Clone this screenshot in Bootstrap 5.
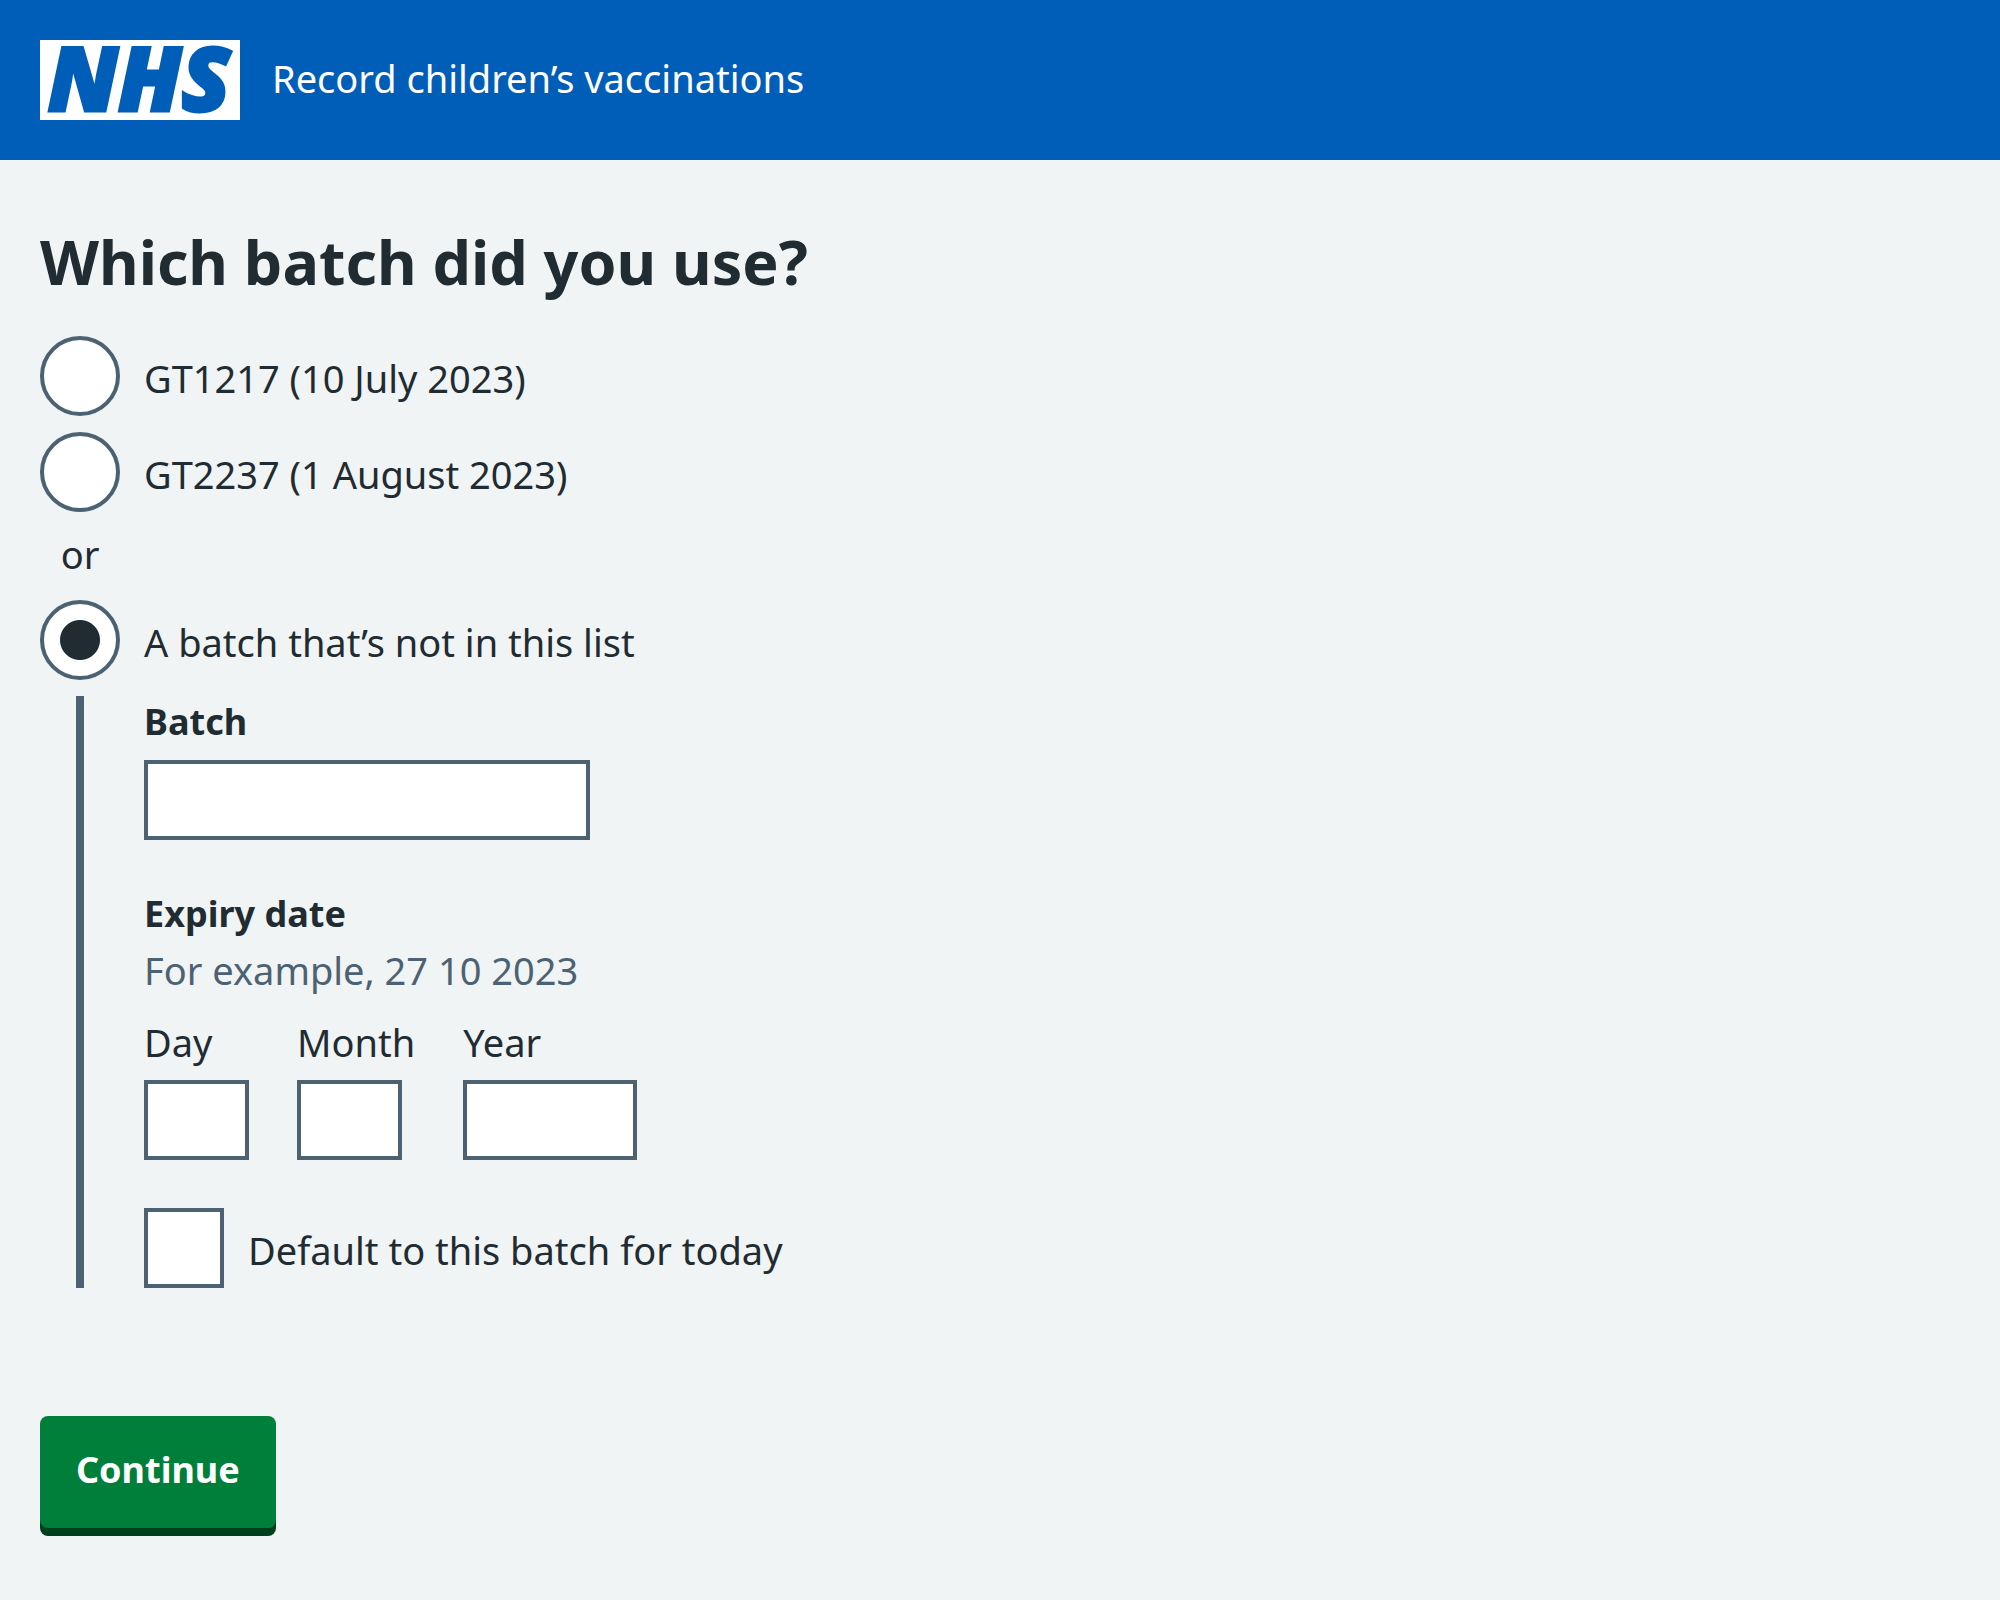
<!DOCTYPE html>
<html lang="en">
<head>
<meta charset="utf-8">
<meta name="viewport" content="width=device-width, initial-scale=1">
<title>Which batch did you use? – Record children’s vaccinations</title>
<link href="https://cdn.jsdelivr.net/npm/bootstrap@5.3.0/dist/css/bootstrap.min.css" rel="stylesheet">
<style>
  :root { --ink: #212b32; --slate: #4c6272; --blue: #005eb8; }
  body { background: #f0f4f5; color: var(--ink); font-family: "Noto Sans", "Open Sans", sans-serif; font-size: 38px; line-height: 52px; }
  .site-header { background: var(--blue); padding: 40px; gap: 32px; }
  .service-name { color: #fff; padding-bottom: 4px; }
  .service-name:hover { color: #fff; text-decoration: underline !important; }
  .site-main { padding: 64px 40px; }
  .page-title { font-size: 61px; line-height: 76px; font-weight: 700; margin-bottom: 36px; }
  .choices { gap: 16px; }
  .choice { gap: 24px; }
  .choice label { padding-top: 16px; }
  .form-check-input.pick, .form-control.field { border: 4px solid var(--slate); background-color: #fff; }
  .form-check-input.pick { width: 80px; height: 80px; margin: 0; }
  .form-check-input.pick[type=checkbox] { border-radius: 0; }
  .form-check-input.pick[type=radio]:checked { background-image: radial-gradient(circle, var(--ink) 19.5px, transparent 20.5px); background-size: auto; }
  .form-check-input.pick[type=checkbox]:checked { background-color: var(--slate); }
  .form-control.field { height: 80px; border-radius: 0; color: var(--ink); font-size: 38px; padding: 8px; }
  .pick:focus, .form-control.field:focus { box-shadow: 0 0 0 8px #ffeb3b; }
  .divider { width: 80px; margin-bottom: 4px; }
  .conditional { margin-left: 36px; padding-left: 60px; border-left: 8px solid var(--slate); }
  .field-label { margin-bottom: 12px; }
  .strong-label { font-size: 36px; line-height: 52px; font-weight: 700; }
  .batch-field { width: 446px; }
  .two-digits { width: 105px; }
  .four-digits { width: 174px; }
  .dates { gap: 48px; margin-top: 20px; margin-bottom: 48px; }
  .hint { color: var(--slate); padding-top: 4px; }
  .expiry { margin-top: 48px; }
  .btn.go { background: #007f3b; color: #fff; border: 0; border-radius: 8px; box-shadow: 0 8px 0 #00401e; padding: 28px 36px 32px; margin-top: 128px; }
  .btn.go:hover { background: #00662f; color: #fff; }
</style>
<script src="https://cdn.jsdelivr.net/npm/bootstrap@5.3.0/dist/js/bootstrap.bundle.min.js"></script>
</head>
<body>
<header class="site-header d-flex align-items-center">
  <a href="#" class="d-block flex-shrink-0" aria-label="NHS home">
    <svg class="d-block overflow-visible" width="200" height="80" viewBox="0 0 200 80">
      <rect width="200" height="80" fill="#fff"/>
      <text x="99" y="71" text-anchor="middle" font-family="Open Sans, Noto Sans, sans-serif" font-size="89" font-weight="800" font-style="italic" fill="#005eb8" stroke="#005eb8" stroke-width="3">NHS</text>
    </svg>
  </a>
  <a href="#" class="service-name text-decoration-none">Record children’s vaccinations</a>
</header>
<main class="site-main">
  <form>
    <h1 class="page-title" id="batch-question">Which batch did you use?</h1>
    <div class="choices d-flex flex-column" role="radiogroup" aria-labelledby="batch-question">
      <div class="choice d-flex align-items-start">
        <input class="form-check-input pick flex-shrink-0" type="radio" name="batch" id="batch-1">
        <label for="batch-1">GT1217 (10 July 2023)</label>
      </div>
      <div class="choice d-flex align-items-start">
        <input class="form-check-input pick flex-shrink-0" type="radio" name="batch" id="batch-2">
        <label for="batch-2">GT2237 (1 August 2023)</label>
      </div>
      <div class="divider text-center">or</div>
      <div class="choice d-flex align-items-start">
        <input class="form-check-input pick flex-shrink-0" type="radio" name="batch" id="batch-other" checked>
        <label for="batch-other">A batch that’s not in this list</label>
      </div>
      <div class="conditional">
        <label class="field-label strong-label d-block" for="batch-name">Batch</label>
        <input class="form-control field batch-field mw-100" type="text" id="batch-name">
        <fieldset class="expiry" aria-describedby="expiry-hint">
          <legend class="strong-label m-0">Expiry date</legend>
          <div class="hint" id="expiry-hint">For example, 27 10 2023</div>
          <div class="dates d-flex flex-wrap">
            <div>
              <label class="field-label d-block" for="expiry-day">Day</label>
              <input class="form-control field two-digits" type="text" inputmode="numeric" id="expiry-day">
            </div>
            <div>
              <label class="field-label d-block" for="expiry-month">Month</label>
              <input class="form-control field two-digits" type="text" inputmode="numeric" id="expiry-month">
            </div>
            <div>
              <label class="field-label d-block" for="expiry-year">Year</label>
              <input class="form-control field four-digits" type="text" inputmode="numeric" id="expiry-year">
            </div>
          </div>
        </fieldset>
        <div class="choice d-flex align-items-start">
          <input class="form-check-input pick flex-shrink-0" type="checkbox" id="default-batch">
          <label for="default-batch">Default to this batch for today</label>
        </div>
      </div>
    </div>
    <button class="btn go strong-label" type="button">Continue</button>
  </form>
</main>
</body>
</html>
